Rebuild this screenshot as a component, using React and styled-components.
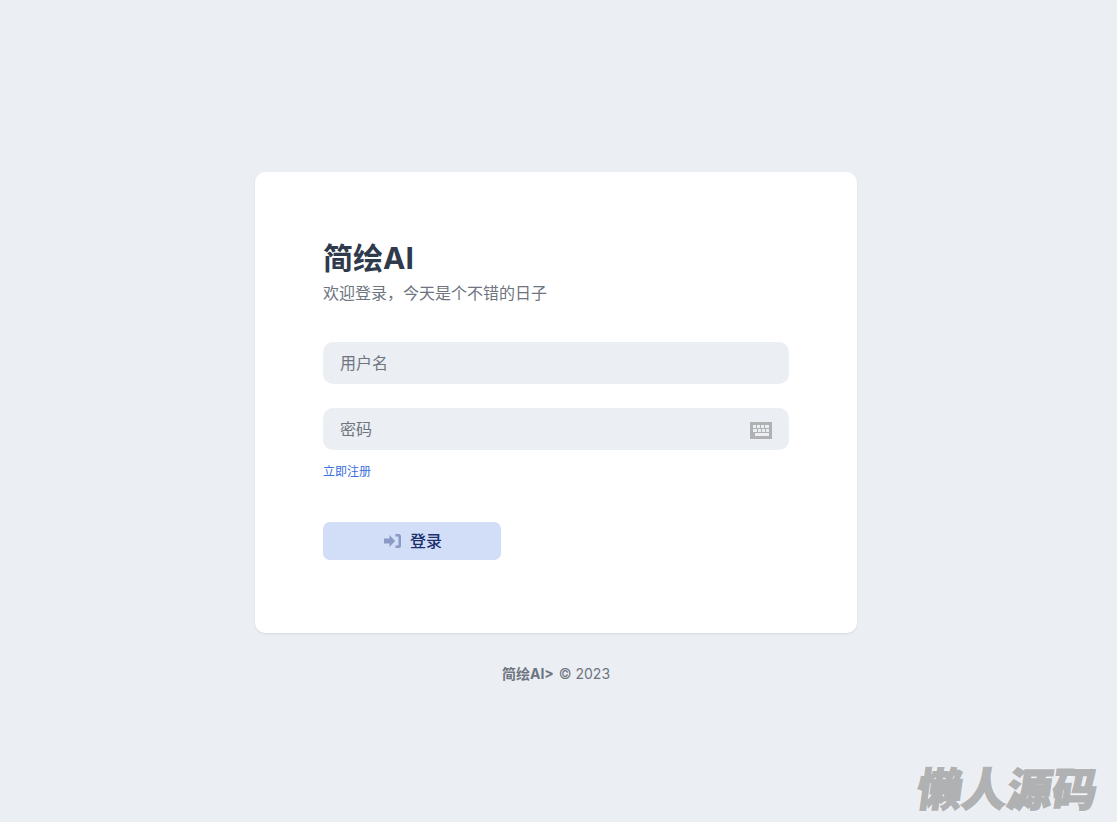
import React from 'react'
import styled, { createGlobalStyle } from 'styled-components'

const sans = `Inter, "Noto Sans CJK SC", sans-serif`

const GlobalStyle = createGlobalStyle`
  * { box-sizing: border-box; }
  body {
    margin: 0;
    background: #ebeef3;
    font-family: ${sans};
  }
`

const Page = styled.div`
  position: relative;
  height: 822px;
  overflow: hidden;
  display: flex;
  flex-direction: column;
  align-items: center;
  padding: 172px 5px 0 0;
`

const Card = styled.main`
  width: 602px;
  height: 461px;
  padding: 68px 68px 0;
  background: #fff;
  border-radius: 10px;
  box-shadow: 0 1px 2px rgba(60, 70, 90, 0.12);
`

const Title = styled.h1`
  margin: 0;
  font-size: 30px;
  line-height: 36px;
  font-weight: 700;
  color: #2f3a4c;
`

const Subtitle = styled.p`
  margin: 5px 0 37px;
  font-size: 16px;
  line-height: 24px;
  color: #6e7580;
`

const Field = styled.div`
  width: 466px;
  height: 42px;
  margin-bottom: 24px;
  padding: 0 17px 2px;
  display: flex;
  align-items: center;
  justify-content: space-between;
  background: #ebeef3;
  border-radius: 10px;
  font-size: 16px;
  color: #6e7580;
`

const KeyboardIcon = styled.svg`
  width: 22px;
  height: 17px;
  margin-top: 4px;
`

const RegisterLink = styled.a`
  display: block;
  margin-top: -11px;
  font-size: 12px;
  line-height: 18px;
  color: #3b6fe0;
`

const LoginButton = styled.button`
  width: 178px;
  height: 38px;
  margin-top: 41px;
  padding: 0 0 2px 2px;
  display: flex;
  align-items: center;
  justify-content: center;
  gap: 9px;
  border: 0;
  border-radius: 7px;
  background: #d2ddf7;
  font-family: ${sans};
  font-size: 16px;
  font-weight: 500;
  color: #1c2f6e;
`

const LoginIcon = styled.svg`
  width: 17px;
  height: 16px;
  margin-top: 2px;
`

const Footer = styled.footer`
  margin-top: 32px;
  font-size: 14px;
  line-height: 18px;
  color: #6e7580;
`

const FooterBrand = styled.b`
  font-weight: 700;
  margin-right: 1px;
`

const Watermark = styled.div`
  position: absolute;
  right: 19px;
  bottom: 7px;
  font-family: "Noto Sans CJK SC", sans-serif;
  font-size: 45px;
  line-height: 56px;
  font-weight: 900;
  letter-spacing: 0;
  color: #b0b1b3;
  -webkit-text-stroke: 1.5px #b0b1b3;
  text-shadow: 0 0 2px #fff, 0 0 2px #fff, 0 0 3px #fff;
  transform: skewX(-8deg);
`

export default function App() {
  return (
    <Page>
      <GlobalStyle />
      <Card>
        <Title>简绘AI</Title>
        <Subtitle>欢迎登录，今天是个不错的日子</Subtitle>
        <Field>用户名</Field>
        <Field>
          密码
          <KeyboardIcon viewBox="0 0 22 17">
            <path
              fill="#b0b1b3"
              fillRule="evenodd"
              d="M0 0h22v17H0z M3 3v3h3V3z M7 3v3h3V3z M11 3v3h3V3z M15 3v3h4V3z M3 7v3h4V7z M8 7v3h3V7z M12 7v3h3V7z M16 7v3h3V7z M5 11v3h14v-3z"
            />
          </KeyboardIcon>
        </Field>
        <RegisterLink>立即注册</RegisterLink>
        <LoginButton>
          <LoginIcon viewBox="0 0 17 16">
            <path
              fill="#8a9ac4"
              d="M0 5.500h5.500V2L11 8l-5.500 6v-3.500H0z M11.500 1h3A2.500 2.500 0 0 1 17 3.500v9a2.500 2.500 0 0 1-2.500 2.500h-3v-2.500h2.500a.5.5 0 0 0 .5-.5v-8a.5.5 0 0 0-.5-.5h-2.500z"
            />
          </LoginIcon>
          登录
        </LoginButton>
      </Card>
      <Footer>
        <FooterBrand>简绘AI&gt;</FooterBrand> © 2023
      </Footer>
      <Watermark>懒人源码</Watermark>
    </Page>
  )
}
